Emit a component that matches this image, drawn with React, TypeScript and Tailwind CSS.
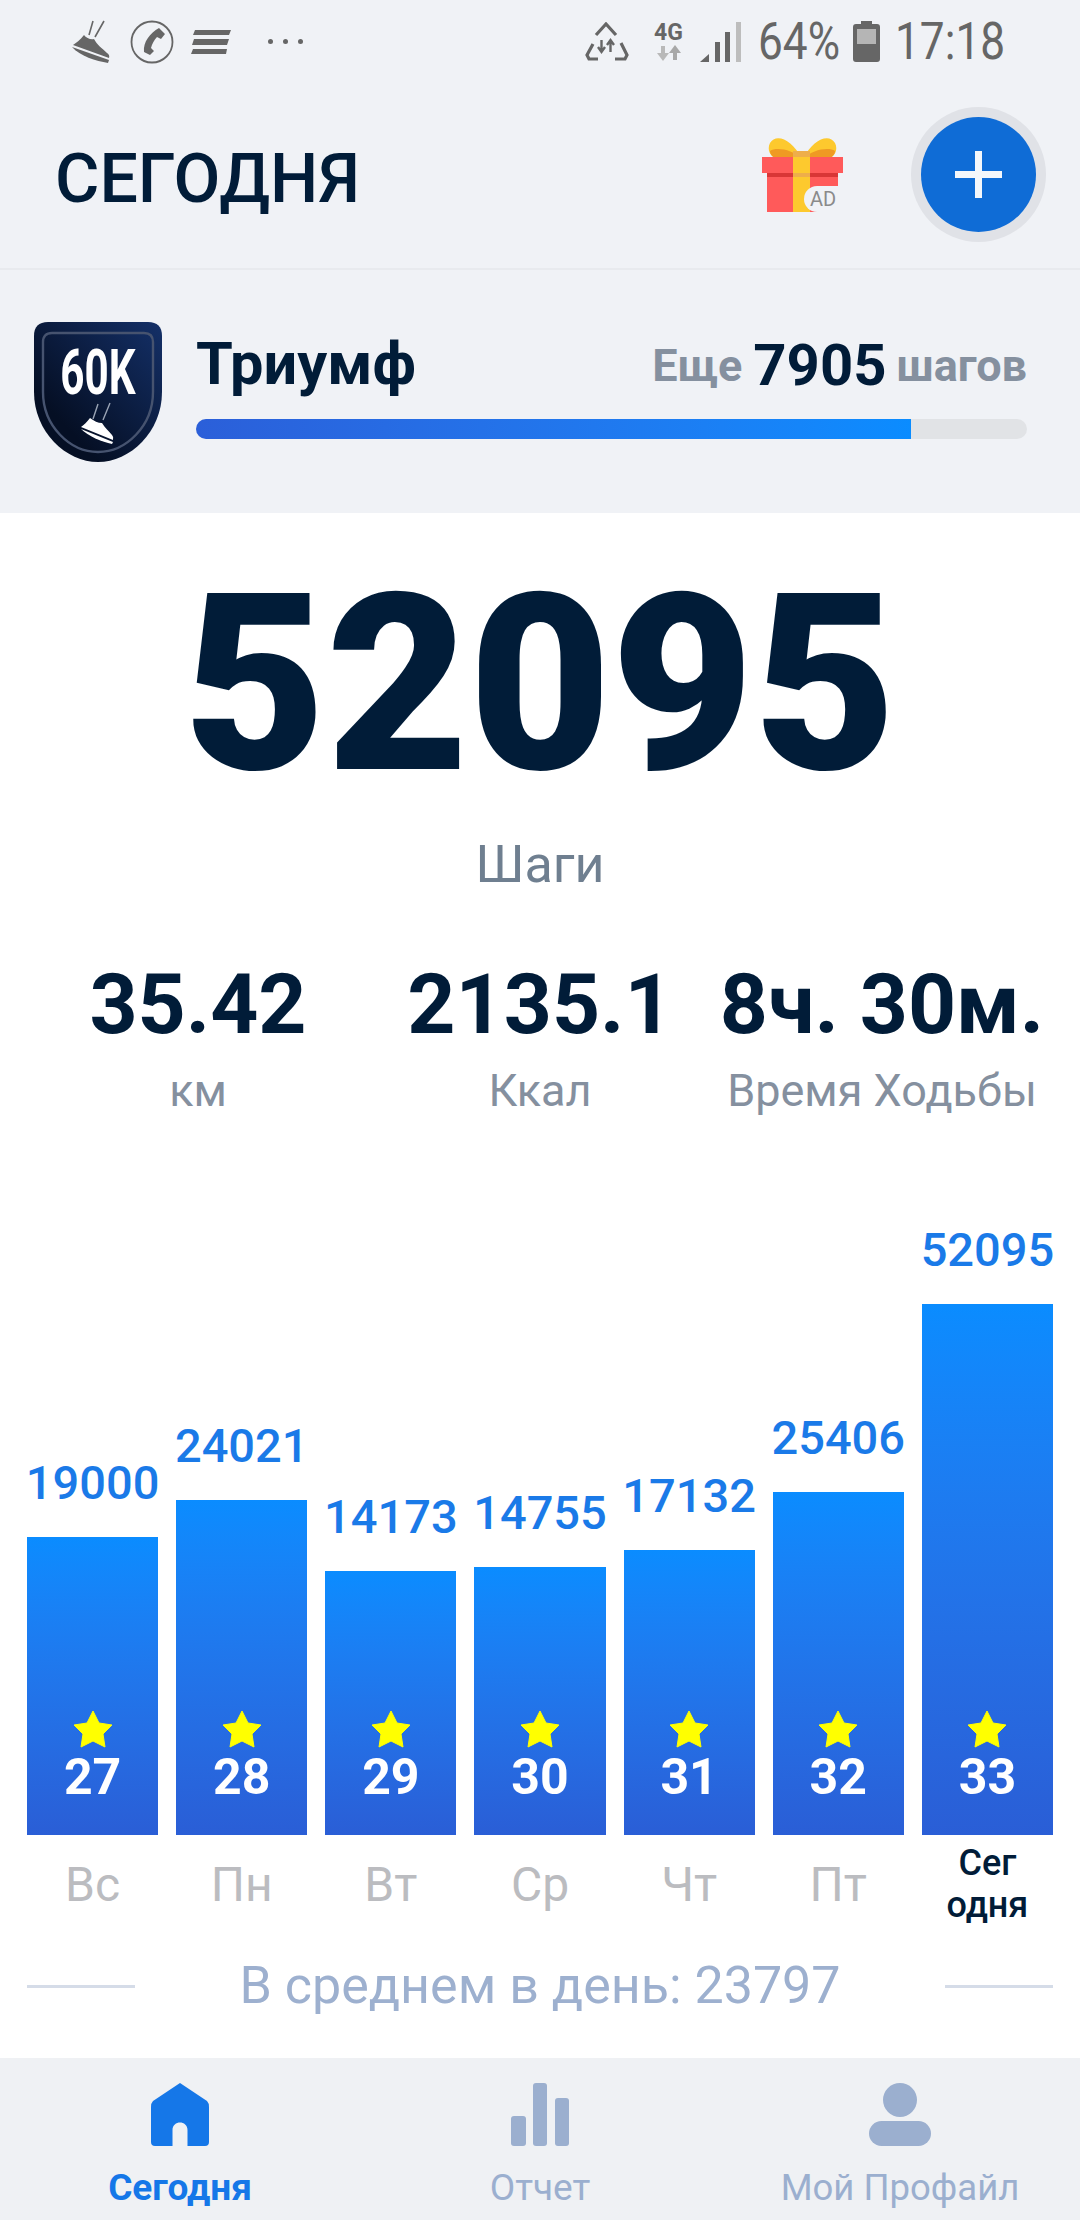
const days = [
  { value: 19000, height: 298, num: 27, day: "Вс" },
  { value: 24021, height: 335, num: 28, day: "Пн" },
  { value: 14173, height: 264, num: 29, day: "Вт" },
  { value: 14755, height: 268, num: 30, day: "Ср" },
  { value: 17132, height: 285, num: 31, day: "Чт" },
  { value: 25406, height: 343, num: 32, day: "Пт" },
  { value: 52095, height: 531, num: 33, day: "Сегодня" },
];

const stats = [
  { value: "35.42", label: "км" },
  { value: "2135.1", label: "Ккал" },
  { value: "8ч. 30м.", label: "Время Ходьбы" },
];

function ShoeIcon() {
  return (
    <svg viewBox="0 0 40 44" className="h-[44px] w-[40px]">
      <path d="M21 1 L17 15 M32 1 L23 17" stroke="#666" strokeWidth="1.6" fill="none" />
      <path d="M12 15 C 14 18 19 20 22 19 C 25 25 30 28 35 33 Q38 35 37 38 L1 25 C 4 23 8 20 12 15 Z" fill="#666" />
      <path d="M0 27 L37 40 L36 43 C 24 41 8 36 0 27 Z" fill="#666" />
    </svg>
  );
}

function StatusBar() {
  return (
    <div className="flex h-[80px] items-center pl-[72px] pr-[76px] pt-[3px] text-[#666666]">
      <ShoeIcon />
      <svg viewBox="0 0 44 44" className="ml-[18px] h-[44px] w-[44px]">
        <circle cx="22" cy="22" r="20.5" fill="none" stroke="#666" strokeWidth="1.8" />
        <path d="M29 8 L35 14 L31 19 L27 17 C 24 20 22 24 21 28 L24 31 L20 35 L14 32 C 13 22 20 13 29 8 Z" fill="#666" />
      </svg>
      <svg viewBox="0 0 40 24" className="ml-[17px] h-[24px] w-[40px]">
        <path d="M4 0 H40 L38 5 H2 Z M3 9 H38 L36 15 H1 Z M2 19 H36 L35 24 H0 Z" fill="#666" />
      </svg>
      <div className="ml-[37px] flex gap-[10px]">
        <span className="h-[5px] w-[5px] rounded-full bg-[#666666]" />
        <span className="h-[5px] w-[5px] rounded-full bg-[#666666]" />
        <span className="h-[5px] w-[5px] rounded-full bg-[#666666]" />
      </div>
      <div className="ml-auto flex items-center">
        <svg viewBox="0 0 44 40" className="h-[40px] w-[44px]">
          <path d="M11 13 L21 2 L31 13 M8 22 L2 33 L4 37 H13 M36 21 L42 33 L40 37 H30" fill="none" stroke="#666" strokeWidth="3.2" />
          <path d="M16.5 18 V29 M13 25 L16.5 30 L20 25 M25.5 30 V19 M22 23 L25.5 18 L29 23" fill="none" stroke="#666" strokeWidth="2.4" />
        </svg>
        <div className="ml-[23px] flex w-[33px] flex-col items-center">
          <span className="font-['Roboto'] text-[23px] leading-[22px] font-bold text-[#666666]">4G</span>
          <svg viewBox="0 0 30 16" className="mt-[1px] h-[16px] w-[30px]">
            <path d="M9 16 L3 8 H7 V1 H11 V8 H15 Z" fill="#b9b9b9" />
            <path d="M21 0 L27 8 H23 V15 H19 V8 H15 Z" fill="#a8a8a8" />
          </svg>
        </div>
        <svg viewBox="0 0 41 40" className="ml-[15px] h-[40px] w-[41px]">
          <path d="M0 40 L9 32 V40 Z M15 20 H20 V40 H15 Z M25 10 H30 V40 H25 Z" fill="#666" />
          <rect x="36" y="0" width="5" height="40" fill="#bdbdbd" />
        </svg>
        <span className="ml-[17px] w-[80px] origin-left scale-x-[0.85] font-['Roboto'] text-[52px] leading-none whitespace-nowrap">64%</span>
        <svg viewBox="0 0 27 41" className="ml-[15px] h-[41px] w-[27px]">
          <path d="M8 0 H19 V3 H24 Q27 3 27 6 V38 Q27 41 24 41 H3 Q0 41 0 38 V6 Q0 3 3 3 H8 Z" fill="#666" />
          <rect x="4" y="8" width="19" height="15" fill="#b5b5b5" />
        </svg>
        <span className="ml-[15px] w-[109px] origin-left scale-x-[0.85] font-['Roboto'] text-[52px] leading-none whitespace-nowrap">17:18</span>
      </div>
    </div>
  );
}

function GiftIcon() {
  return (
    <div className="relative h-[75px] w-[81px]">
      <svg viewBox="0 0 81 75" className="h-full w-full">
        <path d="M40 22 C 30 2 14 -4 8 6 C 4 14 10 22 18 22 Z M41 22 C 51 2 67 -4 73 6 C 77 14 71 22 63 22 Z" fill="#fdc92e" />
        <path d="M40 22 C 30 12 14 10 8 14 C 8 18 12 22 18 22 Z M41 22 C 51 12 67 10 73 14 C 73 18 69 22 63 22 Z" fill="#ef9a23" />
        <rect x="5" y="35" width="71" height="40" fill="#ff5a5a" />
        <rect x="0" y="20" width="81" height="16" fill="#ff5a5a" />
        <rect x="5" y="36" width="71" height="4" fill="#d93636" />
        <rect x="31" y="14" width="17" height="8" fill="#eeae4a" />
        <rect x="31" y="20" width="17" height="55" fill="#fdc92e" />
        <rect x="31" y="36" width="17" height="4" fill="#eeae4a" />
      </svg>
      <span className="absolute right-[5px] bottom-0 flex h-[26px] w-[34px] items-center justify-center rounded-l-full bg-[#f0f2f6] pl-[4px] font-['Roboto'] text-[20px] leading-none text-[#8a8a8a]">
        AD
      </span>
    </div>
  );
}

function Header() {
  return (
    <div className="flex h-[190px] items-center border-b-[2px] border-[#e8eaee] pl-[55px] pr-[44px]">
      <h1 className="mt-[10px] font-['Roboto'] text-[68px] leading-none font-medium text-[#011c38]">СЕГОДНЯ</h1>
      <div className="ml-auto mr-[78px]">
        <GiftIcon />
      </div>
      <button className="flex h-[115px] w-[115px] items-center justify-center rounded-full border-0 bg-[#0f6cd6] shadow-[0_0_0_10px_#e0e2e7]">
        <svg viewBox="0 0 47 47" className="h-[47px] w-[47px]">
          <rect x="0" y="20" width="47" height="7" fill="#f4f7fb" />
          <rect x="20" y="0" width="7" height="47" fill="#f4f7fb" />
        </svg>
      </button>
    </div>
  );
}

function Shield() {
  return (
    <svg viewBox="0 0 128 140" className="h-[140px] w-[128px] shrink-0">
      <defs>
        <linearGradient id="shieldBg" x1="1" y1="0" x2="0" y2="1">
          <stop offset="0" stopColor="#143068" />
          <stop offset="0.75" stopColor="#050f24" />
        </linearGradient>
      </defs>
      <path d="M14 0 H114 Q128 0 128 14 V70 C 128 110 96 140 64 140 C 32 140 0 110 0 70 V14 Q0 0 14 0 Z" fill="url(#shieldBg)" />
      <path d="M18 11 H110 Q119 11 119 20 V70 C 119 104 92 130 64 130 C 36 130 9 104 9 70 V20 Q9 11 18 11 Z" fill="none" stroke="#46536f" strokeWidth="2.4" />
      <text x="64" y="72" textAnchor="middle" fill="#fff" fontFamily="Roboto" fontWeight="700" fontSize="63" transform="translate(64 0) scale(0.67 1) translate(-64 0)">
        60K
      </text>
      <path d="M64 82 L59 97 M76 81 L69 98" stroke="#9aa4b5" strokeWidth="1.4" fill="none" />
      <path d="M56 96 C 60 99 64 101 68 101 C 71 106 75 109 78 113 Q80 115 79 118 L47 105 C 50 103 53 100 56 96 Z" fill="#fff" />
      <path d="M47 107 L79 120 L78 122 C 68 120 54 114 47 107 Z" fill="#fff" />
    </svg>
  );
}

function Achievement() {
  return (
    <div className="flex h-[243px] items-start pl-[34px] pr-[53px] pt-[52px]">
      <Shield />
      <div className="ml-[34px] flex-1">
        <div className="mt-[8px] flex h-[70px] items-center font-['Roboto']">
          <span className="text-[59.5px] leading-none font-bold text-[#011c38]">Триумф</span>
          <span className="ml-auto text-[45px] leading-none font-bold text-[#85909f]">Еще</span>
          <span className="ml-[11px] text-[58px] leading-none font-bold text-[#011c38]">7905</span>
          <span className="ml-[10px] text-[45px] leading-none font-bold text-[#85909f]">шагов</span>
        </div>
        <div className="mt-[19px] h-[20px] overflow-hidden rounded-full bg-[#e1e3e6]">
          <div className="h-full w-[86.1%] bg-gradient-to-r from-[#2b5fd9] to-[#0a8cff]" />
        </div>
      </div>
    </div>
  );
}

function Summary() {
  return (
    <div className="font-['Roboto']">
      <div className="mt-[44px] h-[256px] text-center text-[246px] leading-[256px] font-black text-[#011c38]">52095</div>
      <div className="mt-[25px] text-center text-[52px] leading-[54px] text-[#6f7f90]">Шаги</div>
      <div className="mx-[27px] mt-[68px] grid grid-cols-3">
        {stats.map((s) => (
          <div key={s.label} className="flex flex-col items-center whitespace-nowrap">
            <span className="text-[84px] leading-[90px] font-bold text-[#011c38]">{s.value}</span>
            <span className="mt-[16px] text-[45px] leading-[50px] text-[#85909f]">{s.label}</span>
          </div>
        ))}
      </div>
    </div>
  );
}

function Star() {
  return (
    <svg viewBox="0 0 40 38" className="h-[38px] w-[40px]">
      <path d="M20 1 L26 13 L39 15 L30 24 L32 37 L20 31 L8 37 L10 24 L1 15 L14 13 Z" fill="#ffff00" stroke="#ffff00" strokeLinejoin="round" strokeWidth="1" />
    </svg>
  );
}

function Chart() {
  return (
    <div className="mt-[106px] font-['Roboto']">
      <div className="grid grid-cols-7 items-end gap-[18px] px-[27px]">
        {days.map((d) => (
          <div key={d.num} className="flex flex-col items-center">
            <span className="mb-[26px] text-[47px] leading-[56px] font-medium whitespace-nowrap text-[#1a7ae8]">{d.value}</span>
            <div
              className="flex w-full flex-col items-center justify-end bg-gradient-to-b from-[#0a8cff] to-[#2a5ed6] pb-[29px]"
              style={{ height: d.height }}
            >
              <Star />
              <span className="text-[50px] leading-[58px] font-bold text-white">{d.num}</span>
            </div>
            {d.num === 33 ? (
              <span className="mt-[4px] flex h-[90px] w-[100px] items-center justify-center text-center text-[36px] leading-[42px] font-medium text-[#011c38]">
                Сег одня
              </span>
            ) : (
              <span className="mt-[20px] h-[74px] text-[48px] leading-[60px] text-[#bbbcc0]">{d.day}</span>
            )}
          </div>
        ))}
      </div>
      <div className="mt-[29px] flex items-center px-[27px]">
        <div className="h-[3px] w-[108px] bg-[#d5dce8]" />
        <span className="flex-1 text-center text-[52px] leading-[56px] text-[#9db0cf]">В среднем в день: 23797</span>
        <div className="h-[3px] w-[108px] bg-[#d5dce8]" />
      </div>
    </div>
  );
}

function BottomNav() {
  return (
    <div className="mt-auto grid h-[162px] grid-cols-3 bg-[#eff1f4] font-['Roboto']">
      <div className="flex flex-col items-center pt-[25px]">
        <svg viewBox="0 0 58 63" className="h-[63px] w-[58px]">
          <path d="M29 0 L56 18 Q58 20 58 24 V59 Q58 63 54 63 H36.5 V47 C36.5 37 21.5 37 21.5 47 V63 H4 Q0 63 0 59 V24 Q0 20 2 18 Z" fill="#1577e8" />
        </svg>
        <span className="mt-[21px] text-[37px] leading-[42px] font-bold text-[#1577e8]">Сегодня</span>
      </div>
      <div className="flex flex-col items-center pt-[25px]">
        <svg viewBox="0 0 58 63" className="h-[63px] w-[58px]">
          <rect x="0" y="33" width="15" height="30" rx="3" fill="#9bafcf" />
          <rect x="22" y="0" width="14" height="63" rx="3" fill="#9bafcf" />
          <rect x="44" y="15" width="14" height="48" rx="3" fill="#9bafcf" />
        </svg>
        <span className="mt-[21px] text-[37px] leading-[42px] text-[#9bafcf]">Отчет</span>
      </div>
      <div className="flex flex-col items-center pt-[25px]">
        <svg viewBox="0 0 62 63" className="h-[63px] w-[62px]">
          <ellipse cx="31" cy="17" rx="17" ry="17" fill="#9bafcf" />
          <rect x="0" y="38" width="62" height="25" rx="12.5" fill="#9bafcf" />
        </svg>
        <span className="mt-[21px] text-[36.5px] leading-[42px] text-[#9bafcf]">Мой Профайл</span>
      </div>
    </div>
  );
}

export default function App() {
  return (
    <div className="flex h-[2220px] w-[1080px] flex-col overflow-hidden bg-white">
      <div className="bg-[#f0f2f6]">
        <StatusBar />
        <Header />
        <Achievement />
      </div>
      <Summary />
      <Chart />
      <BottomNav />
    </div>
  );
}
